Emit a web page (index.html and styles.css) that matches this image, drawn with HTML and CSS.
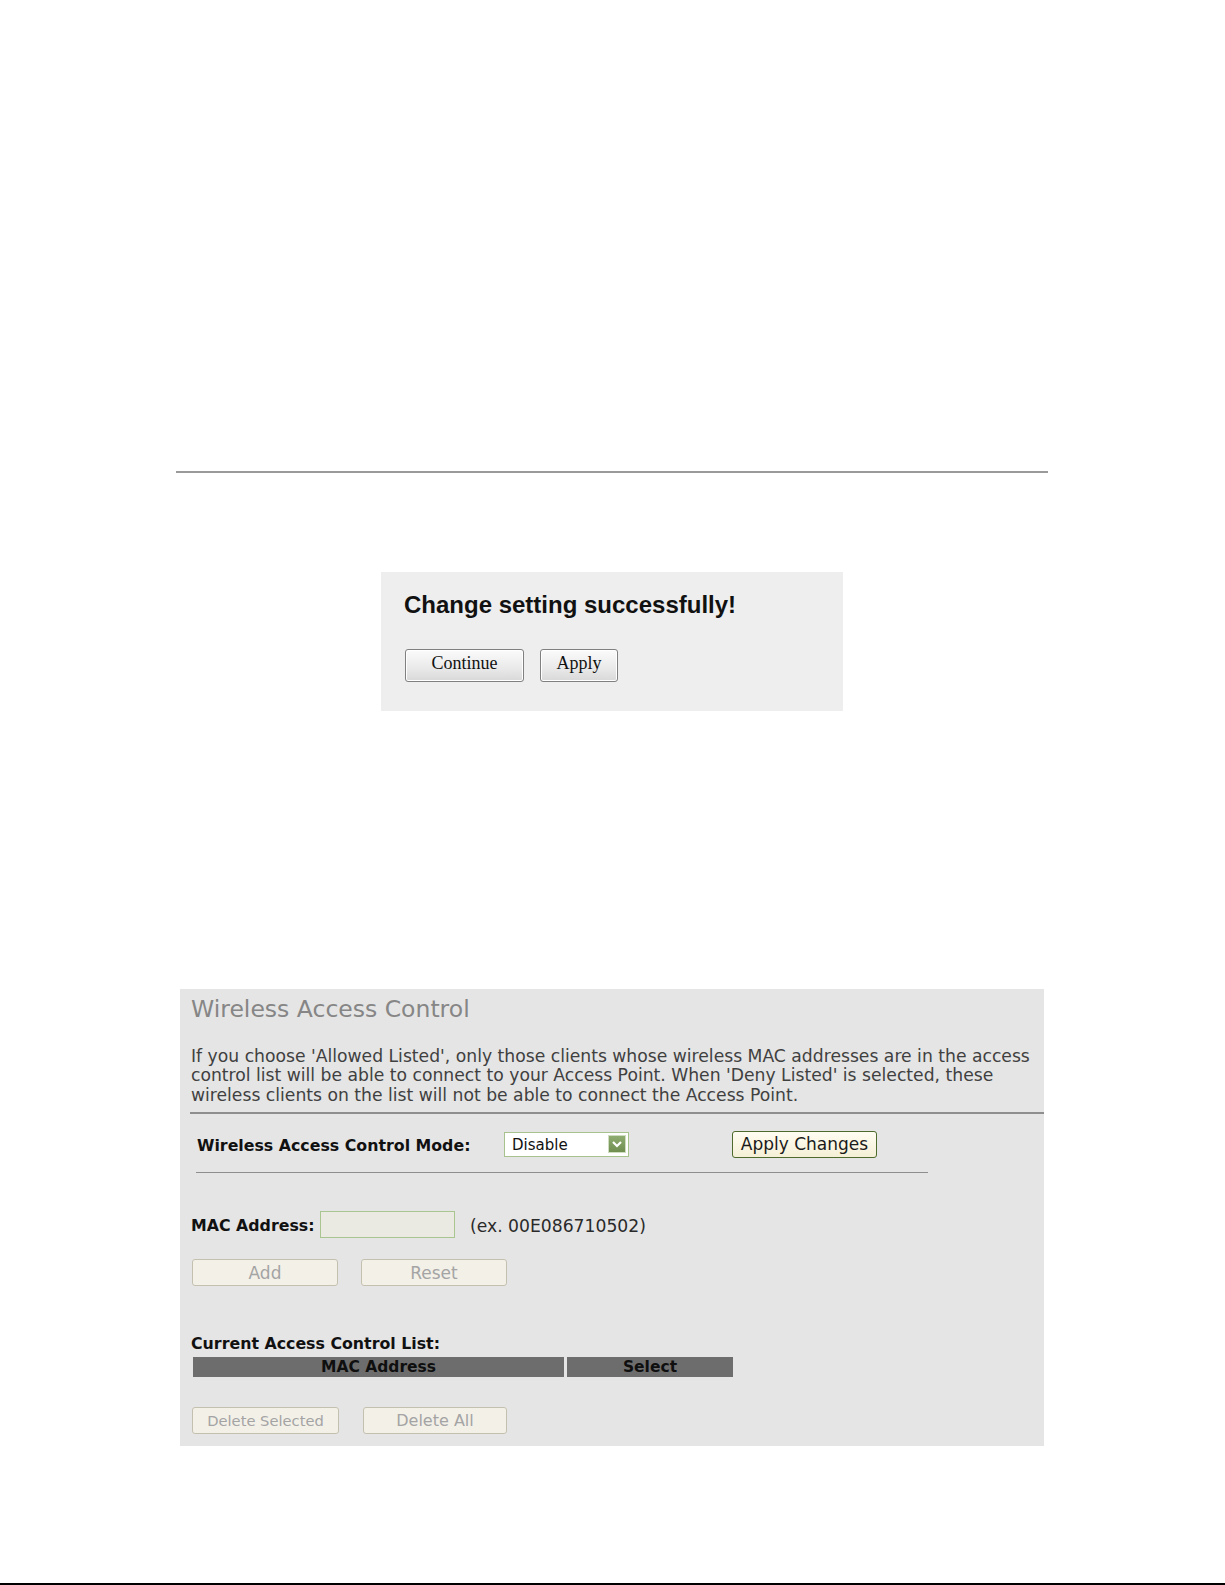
FILE: index.html
```html
<!DOCTYPE html>
<html>
<head>
<meta charset="utf-8">
<link rel="stylesheet" href="styles.css">
</head>
<body>
<div class="page">
  <div class="top-rule"></div>

  <div class="dialog">
    <div class="dialog-title">Change setting successfully!</div>
    <div class="dialog-buttons">
      <button class="dbtn dbtn-continue">Continue</button>
      <button class="dbtn dbtn-apply">Apply</button>
    </div>
  </div>

  <div class="panel">
    <div class="panel-title">Wireless Access Control</div>
    <p class="panel-text">If you choose 'Allowed Listed', only those clients whose wireless MAC addresses are in the access control list will be able to connect to your Access Point. When 'Deny Listed' is selected, these wireless clients on the list will not be able to connect the Access Point.</p>
    <div class="rule rule-wide"></div>

    <div class="mode-row">
      <span class="label label-mode">Wireless Access Control Mode:</span>
      <div class="select">
        <span class="select-text">Disable</span>
        <span class="select-arrow">
          <svg width="12" height="10" viewBox="0 0 12 10"><path d="M2 3 L6 7 L10 3" fill="none" stroke="#ffffff" stroke-width="2.2"/></svg>
        </span>
      </div>
      <button class="btn-apply">Apply Changes</button>
    </div>
    <div class="rule rule-short"></div>

    <div class="mac-row">
      <span class="label label-mac">MAC Address:</span>
      <span class="mac-input"></span>
      <span class="mac-hint">(ex. 00E086710502)</span>
    </div>

    <div class="btn-row btn-row-add">
      <button class="btn-dis btn-add">Add</button>
      <button class="btn-dis btn-reset">Reset</button>
    </div>

    <div class="label label-list">Current Access Control List:</div>
    <div class="list-head">
      <div class="head-cell head-mac">MAC Address</div>
      <div class="head-cell head-select">Select</div>
    </div>

    <div class="btn-row btn-row-del">
      <button class="btn-dis btn-delsel">Delete Selected</button>
      <button class="btn-dis btn-delall">Delete All</button>
    </div>
  </div>

  <div class="bottom-rule"></div>
</div>
</body>
</html>
```

FILE: styles.css
```css
html, body {
  margin: 0;
  padding: 0;
  background: #ffffff;
}

.page {
  width: 1225px;
  display: flex;
  flex-direction: column;
  align-items: flex-start;
}

.top-rule {
  margin-top: 471px;
  margin-left: 176px;
  width: 872px;
  height: 2px;
  background: #9a9a9a;
}

/* success dialog */
.dialog {
  margin-top: 99px;
  margin-left: 381px;
  width: 462px;
  height: 139px;
  box-sizing: border-box;
  background: #eeeeee;
  padding: 19px 0 0 23px;
}

.dialog-title {
  font-family: "Liberation Sans", Arial, sans-serif;
  font-weight: bold;
  font-size: 24px;
  line-height: 28px;
  color: #111111;
}

.dialog-buttons {
  display: flex;
  gap: 16px;
  margin-top: 30px;
  margin-left: 1px;
}

.dbtn {
  height: 33px;
  box-sizing: border-box;
  border: 1px solid #808080;
  border-radius: 3px;
  background: linear-gradient(#fbfbfb, #e9e9e9 60%, #d8d8d8);
  box-shadow: inset 0 0 0 1px #ffffff;
  font-family: "Liberation Serif", "Times New Roman", serif;
  font-size: 18px;
  color: #111111;
  padding: 0 0 4px 0;
}

.dbtn-continue { width: 119px; }
.dbtn-apply { width: 78px; }

/* access control panel */
.panel {
  margin-top: 278px;
  margin-left: 180px;
  width: 864px;
  height: 457px;
  box-sizing: border-box;
  background: #e5e5e5;
  padding-top: 6px;
  font-family: "DejaVu Sans", Verdana, sans-serif;
  color: #3c3c3c;
}

.panel-title {
  margin-left: 11px;
  font-size: 23.5px;
  line-height: 28px;
  color: #868686;
}

.panel-text {
  margin: 24px 0 0 11px;
  width: 850px;
  font-size: 17.2px;
  line-height: 19.3px;
  color: #404040;
}

.rule {
  height: 2px;
  background: #8e8e8e;
}

.rule-wide {
  margin-top: 7px;
  margin-left: 10px;
  width: 854px;
}

.rule-short {
  margin-top: 14px;
  margin-left: 16px;
  width: 732px;
  height: 1.5px;
}

.label {
  font-weight: bold;
  color: #111111;
}

.mode-row {
  margin-top: 17px;
  height: 27px;
  display: flex;
  align-items: center;
}

.label-mode {
  margin-left: 17px;
  width: 307px;
  font-size: 15.8px;
  padding-top: 2px;
}

.select {
  width: 125px;
  height: 25px;
  box-sizing: border-box;
  border: 1px solid #a7c28c;
  background: #ffffff;
  display: flex;
  align-items: center;
  justify-content: space-between;
  padding: 0 2px 0 7px;
}

.select-text {
  font-size: 15px;
  color: #111111;
  padding-top: 2px;
}

.select-arrow {
  width: 18px;
  height: 18px;
  box-sizing: border-box;
  background: linear-gradient(#8fac70, #6f8e50);
  border: 1px solid #cfdcc0;
  display: flex;
  align-items: center;
  justify-content: center;
}

.btn-apply {
  margin-left: 103px;
  width: 145px;
  height: 27px;
  box-sizing: border-box;
  border: 1.5px solid #4e6a2c;
  border-radius: 3px;
  background: linear-gradient(#fffdf2, #f4efd6);
  font-family: "DejaVu Sans", Verdana, sans-serif;
  font-size: 17px;
  color: #1a1a1a;
  padding: 0 0 1px 0;
}

.mac-row {
  margin-top: 38px;
  height: 27px;
  display: flex;
  align-items: center;
}

.label-mac {
  margin-left: 11px;
  width: 129px;
  font-size: 15.8px;
  padding-top: 2px;
}

.mac-input {
  width: 135px;
  height: 27px;
  box-sizing: border-box;
  border: 1px solid #a9c590;
  background: #eae9e2;
}

.mac-hint {
  margin-left: 15px;
  font-size: 17.2px;
  color: #2a2a2a;
  padding-top: 2px;
}

.btn-row {
  display: flex;
}

.btn-row-add {
  margin-top: 21px;
  margin-left: 12px;
  gap: 23px;
}

.btn-dis {
  height: 27px;
  box-sizing: border-box;
  border: 1px solid #c4c0b0;
  border-radius: 3px;
  background: #f3f0e8;
  font-family: "DejaVu Sans", Verdana, sans-serif;
  font-size: 17px;
  color: #a4a4a4;
  padding: 0;
}

.btn-add, .btn-reset { width: 146px; }

.label-list {
  margin-top: 48px;
  margin-left: 11px;
  font-size: 15.8px;
  line-height: 19px;
}

.list-head {
  margin-top: 4px;
  margin-left: 13px;
  display: flex;
  gap: 3px;
}

.head-cell {
  height: 20px;
  background: #6d6d6d;
  font-weight: bold;
  font-size: 15.5px;
  line-height: 20px;
  color: #0f0f0f;
  text-align: center;
}

.head-mac { width: 371px; }
.head-select { width: 166px; }

.btn-row-del {
  margin-top: 30px;
  margin-left: 12px;
  gap: 24px;
}

.btn-delsel {
  width: 147px;
  font-size: 14.7px;
}

.btn-delall {
  width: 144px;
  font-size: 16px;
}

.bottom-rule {
  margin-top: 137px;
  width: 1225px;
  height: 2px;
  background: #000000;
}
```
